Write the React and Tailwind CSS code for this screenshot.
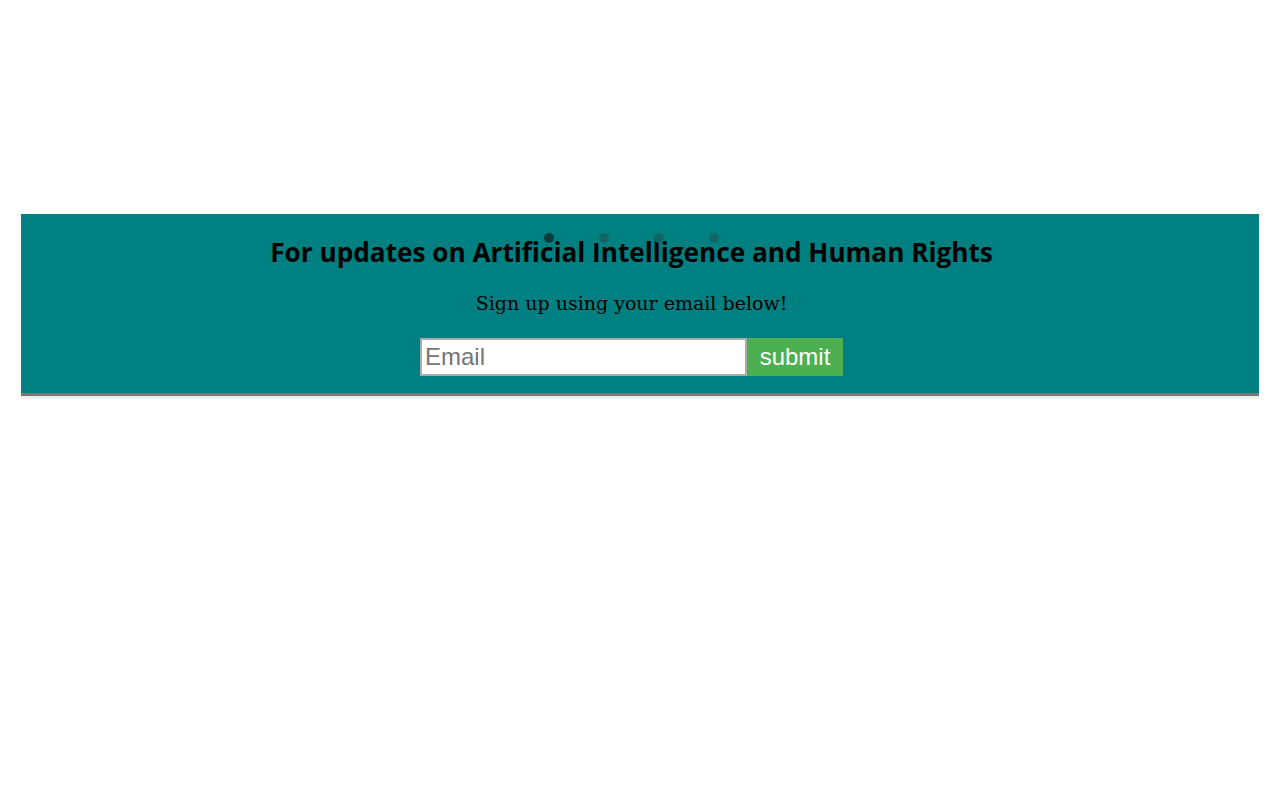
export default function App() {
  return (
    <div className="min-h-[800px] bg-white pt-[214px]">
      <div className="mx-[21px]">
        <section className="relative bg-[#008080] pt-[20px] pr-[17px] pb-[17px] text-center">
          <div className="pointer-events-none absolute left-[523px] top-[19px] flex gap-[45px]">
            <span className="h-[10px] w-[10px] rounded-full bg-[#0b3b3b]" />
            <span className="h-[10px] w-[10px] rounded-full bg-[#136565]" />
            <span className="h-[10px] w-[10px] rounded-full bg-[#136565]" />
            <span className="h-[10px] w-[10px] rounded-full bg-[#136565]" />
          </div>
          <h2 className="font-['Open_Sans',sans-serif] text-[26.2px] font-bold leading-[36px] text-black">
            For updates on Artificial Intelligence and Human Rights
          </h2>
          <p className="mt-[20px] font-['DejaVu_Serif',serif] text-[19px] leading-[26px] text-black">
            Sign up using your email below!
          </p>
          <form className="mt-[22px] flex justify-center">
            <input
              type="email"
              placeholder="Email"
              className="h-[38px] w-[327px] border-2 border-[#aaaaaa] bg-white px-[3px] font-['Liberation_Sans',sans-serif] text-[24px] text-black outline-none placeholder:text-[#757575]"
            />
            <button
              type="button"
              className="h-[38px] w-[96px] bg-[#4caf50] font-['Liberation_Sans',sans-serif] text-[24px] text-white"
            >
              submit
            </button>
          </form>
        </section>
        <div className="h-[3px] bg-[#777777]" />
        <div className="h-[3px] bg-[#eeeeee]" />
      </div>
    </div>
  );
}
